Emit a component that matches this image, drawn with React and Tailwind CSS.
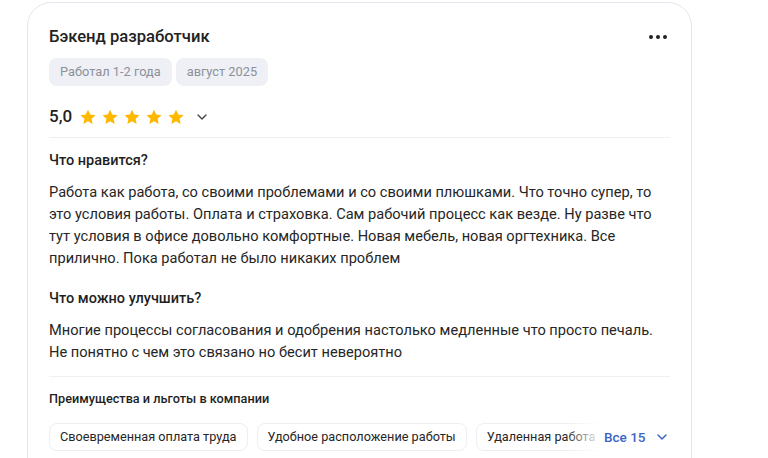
import { ChevronDown } from "lucide-react";

const Star = () => (
  <svg width="18" height="18" viewBox="0 0 24 24" className="shrink-0">
    <path
      d="M12 2.2l2.95 6.55 7.15.75-5.35 4.8 1.5 7.05L12 17.75 5.75 21.35l1.5-7.05L1.9 9.5l7.15-.75z"
      fill="#ffb800"
    />
  </svg>
);

const perks = [
  "Своевременная оплата труда",
  "Удобное расположение работы",
  "Удаленная работа",
];

function App() {
  return (
    <div
      className="h-screen overflow-hidden bg-white pl-[27px] pt-[2px] text-[#1f1f1f]"
      style={{ fontFamily: "Roboto, 'Noto Sans', sans-serif" }}
    >
      <div className="w-[665px] h-[480px] rounded-[24px] border border-[#e3e6ed] px-[21px] pt-[22px]">
        <div className="flex items-center justify-between h-6">
          <h2 className="text-[16.6px] font-medium leading-6 text-[#222]">
            Бэкенд разработчик
          </h2>
          <div className="flex gap-[3px] pr-[3px]">
            <span className="w-[4px] h-[4px] rounded-full bg-[#222]" />
            <span className="w-[4px] h-[4px] rounded-full bg-[#222]" />
            <span className="w-[4px] h-[4px] rounded-full bg-[#222]" />
          </div>
        </div>

        <div className="flex gap-1 mt-[9px]">
          <span className="h-7 px-[11px] flex items-center rounded-lg bg-[#eef0f5] text-[12.8px] text-[#8c919b]">
            Работал 1-2 года
          </span>
          <span className="h-7 px-[11px] flex items-center rounded-lg bg-[#eef0f5] text-[12.8px] text-[#8c919b]">
            август 2025
          </span>
        </div>

        <div className="flex items-center h-6 mt-[19px]">
          <span className="text-[17px] font-medium mr-[7px]">5,0</span>
          <div className="flex gap-[4px]">
            <Star />
            <Star />
            <Star />
            <Star />
            <Star />
          </div>
          <ChevronDown className="w-4 h-4 ml-[9px] text-[#444]" strokeWidth={2} />
        </div>

        <div className="h-px bg-[#eef0f3] mt-[8px]" />

        <h3 className="text-[14.5px] font-medium leading-[22px] mt-[12px]">
          Что нравится?
        </h3>
        <p className="text-[14.62px] leading-[22px] mt-[9px] text-[#262626]">
          Работа как работа, со своими проблемами и со своими плюшками. Что точно супер, то
          <br />
          это условия работы. Оплата и страховка. Сам рабочий процесс как везде. Ну разве что
          <br />
          тут условия в офисе довольно комфортные. Новая мебель, новая оргтехника. Все
          <br />
          прилично. Пока работал не было никаких проблем
        </p>

        <h3 className="text-[14.5px] font-medium leading-[22px] mt-[19px]">
          Что можно улучшить?
        </h3>
        <p className="text-[14.62px] leading-[22px] mt-[9px] text-[#262626]">
          Многие процессы согласования и одобрения настолько медленные что просто печаль.
          <br />
          Не понятно с чем это связано но бесит невероятно
        </p>

        <div className="h-px bg-[#eef0f3] mt-[13px]" />

        <h4 className="text-[12.7px] font-medium leading-5 mt-[12px]">
          Преимущества и льготы в компании
        </h4>

        <div className="flex items-center mt-[14px]">
          <div className="relative w-[552px] shrink-0 overflow-hidden">
            <div className="flex gap-[9px]">
              {perks.map((p) => (
                <span
                  key={p}
                  className="h-7 px-[10px] shrink-0 flex items-center rounded-lg border border-[#eceef2] bg-white text-[12.7px] whitespace-nowrap text-[#262626]"
                >
                  {p}
                </span>
              ))}
            </div>
            <div className="absolute right-0 top-0 h-full w-[36px] bg-gradient-to-r from-transparent to-white" />
          </div>
          <button className="flex items-center whitespace-nowrap shrink-0 ml-[3px] text-[13.5px] font-medium text-[#3a64c8]">
            Все 15
            <ChevronDown className="w-4 h-4 ml-[8px]" strokeWidth={2.2} />
          </button>
        </div>
      </div>
    </div>
  );
}

export default App;
